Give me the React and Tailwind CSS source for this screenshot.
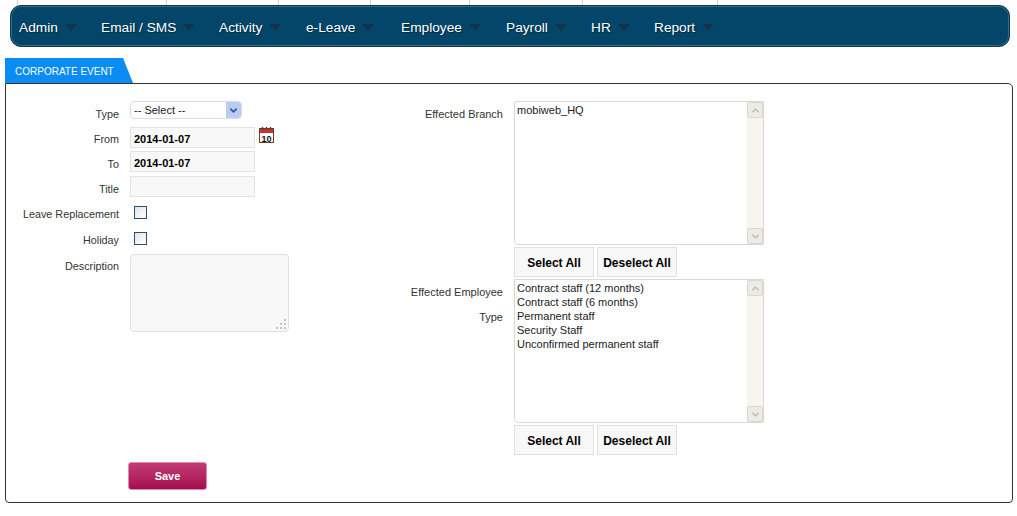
import { ChevronDown, ChevronUp } from 'lucide-react';

const topCells = ['w-[18px]', 'w-[149px]', 'w-[112px]', 'w-[92px]', 'w-[99px]', 'w-[113px]', 'w-[135px]'];

const menuItems = [
  { label: 'Admin', width: 'w-[82px]' },
  { label: 'Email / SMS', width: 'w-[118px]' },
  { label: 'Activity', width: 'w-[87px]' },
  { label: 'e-Leave', width: 'w-[95px]' },
  { label: 'Employee', width: 'w-[105px]' },
  { label: 'Payroll', width: 'w-[85px]' },
  { label: 'HR', width: 'w-[63px]' },
  { label: 'Report', width: 'w-[80px]' },
];

const employeeTypes = [
  'Contract staff (12 months)',
  'Contract staff (6 months)',
  'Permanent staff',
  'Security Staff',
  'Unconfirmed permanent staff',
];

// Label on the left, right aligned, with the field beside it
const FormRow = ({ label, className, labelClass = 'pt-[4px]', children }) => (
  <div className={`flex gap-[11px] ${className}`}>
    <label className={`w-[113px] shrink-0 text-right text-[10.8px] leading-[16px] ${labelClass}`}>{label}</label>
    {children}
  </div>
);

const TextField = ({ value }) => (
  <div className="w-[125px] h-[21px] border border-[#e3e3e3] bg-[#f8f8f8] px-[3px] text-[11px] leading-[22px] font-bold text-black">
    {value}
  </div>
);

const CheckBox = () => (
  <div className="ml-[4px] w-[13px] h-[13px] border border-[#2f5068] bg-gradient-to-br from-[#dfe5ea] to-white" />
);

const CalendarIcon = () => (
  <svg width="15" height="16" viewBox="0 0 15 16" className="ml-[4px]">
    <rect x="0.5" y="1.5" width="14" height="14" fill="#fff" stroke="#6b3b2a" />
    <rect x="1" y="2" width="13" height="4" fill="#c8342a" />
    <path d="M3.5 0v3M7.5 0v3M11.5 0v3" stroke="#5a3a30" strokeWidth="1.4" />
    <text x="7.5" y="14.5" textAnchor="middle" fontSize="9" fontWeight="700" fontFamily="'Liberation Sans', sans-serif" fill="#111">10</text>
  </svg>
);

// Listbox with a painted scrollbar track
const ListBox = ({ items }) => (
  <div className="relative w-[250px] h-[144px] border border-[#d8d8d8] rounded-bl-[4px] bg-white pl-[2px] pt-[1px] text-[11px] leading-[14px] text-[#222]">
    {items.map((item) => (
      <div key={item}>{item}</div>
    ))}
    <div className="absolute right-0 top-0 bottom-0 w-[16px] bg-[#f6f5f0] flex flex-col justify-between">
      <div className="h-[16px] bg-[#ecebe4] border border-[#d9d8d0] rounded-[2px] flex items-center justify-center">
        <ChevronUp size={11} strokeWidth={3} className="text-[#b5b5ab]" />
      </div>
      <div className="h-[16px] bg-[#ecebe4] border border-[#d9d8d0] rounded-[2px] flex items-center justify-center">
        <ChevronDown size={11} strokeWidth={3} className="text-[#b5b5ab]" />
      </div>
    </div>
  </div>
);

const SelectButtons = () => (
  <div className="flex gap-[3px] mt-[2px]">
    <button className="w-[80px] h-[30px] pt-[2px] border border-[#e0e0e0] bg-[#f8f8f8] text-[12px] font-bold text-black">Select All</button>
    <button className="w-[80px] h-[30px] pt-[2px] border border-[#e0e0e0] bg-[#f8f8f8] text-[12px] font-bold text-black">Deselect All</button>
  </div>
);

const App = () => {
  return (
    <div className="w-[1017px] h-[516px] bg-white overflow-hidden font-['Liberation_Sans',Arial,sans-serif] text-[11px] text-[#333]">
      {/* Stubs of the bar above the menu */}
      <div className="flex h-[5px]">
        {topCells.map((width, i) => (
          <div key={i} className={`${width} h-full border-r border-[#cfcfcf]`} />
        ))}
      </div>

      {/* Main menu */}
      <nav className="ml-[10px] mr-[7px] h-[42px] flex items-center pl-[8px] pt-[4px] rounded-[11px] border border-[#16354a] bg-[#03466a] shadow-[inset_0_0_0_1px_#2f6a88]">
        {menuItems.map(({ label, width }) => (
          <div key={label} className={`${width} flex items-center gap-[7px] text-[13.7px] text-white [text-shadow:1px_1px_1px_#00283f]`}>
            <span>{label}</span>
            <span className="w-0 h-0 border-x-[6px] border-x-transparent border-t-[7px] border-t-[#14324a]" />
          </div>
        ))}
      </nav>

      {/* Tab */}
      <div className="mt-[11px] ml-[5px] w-[128px] h-[25px] pl-[10px] bg-[#0a8cf5] [clip-path:polygon(0_0,118px_0,128px_100%,0_100%)] text-[10px] leading-[27px] text-white">
        CORPORATE EVENT
      </div>

      {/* Form panel */}
      <div className="mr-[4px] ml-[5px] h-[420px] border border-[#333] rounded-tr-[5px] rounded-b-[4px] flex pt-[17px]">
        <div className="w-[372px] shrink-0">
          <FormRow label="Type" labelClass="pt-[5px]" className="h-[18px]">
            <div className="relative w-[112px] h-[18px] border border-[#d3deee] rounded-[4px] bg-white pl-[3px] text-[11px] leading-[16px] text-[#222]">
              -- Select --
              <div className="absolute right-0 top-0 bottom-0 w-[15px] rounded-r-[3px] bg-[#b9cdf2] flex items-center justify-center">
                <ChevronDown size={11} strokeWidth={3.5} className="text-[#35568f]" />
              </div>
            </div>
          </FormRow>
          <FormRow label="From" className="mt-[8px] items-start">
            <TextField value="2014-01-07" />
            <div className="-ml-[11px]"><CalendarIcon /></div>
          </FormRow>
          <FormRow label="To" labelClass="pt-[5px]" className="mt-[3px]">
            <TextField value="2014-01-07" />
          </FormRow>
          <FormRow label="Title" labelClass="pt-[5px]" className="mt-[4px]">
            <TextField />
          </FormRow>
          <FormRow label="Leave Replacement" labelClass="pt-0" className="mt-[9px] h-[13px]">
            <CheckBox />
          </FormRow>
          <FormRow label="Holiday" labelClass="pt-0" className="mt-[13px] h-[13px]">
            <CheckBox />
          </FormRow>
          <FormRow label="Description" className="mt-[9px]">
            <div className="relative w-[159px] h-[78px] border border-[#e0e0e0] rounded-[4px] bg-[#f8f8f8]">
              <svg width="11" height="11" viewBox="0 0 11 11" className="absolute right-[1px] bottom-[1px]" fill="#c4c4c4">
                <rect x="8" y="0" width="2" height="2" />
                <rect x="4" y="4" width="2" height="2" />
                <rect x="8" y="4" width="2" height="2" />
                <rect x="0" y="8" width="2" height="2" />
                <rect x="4" y="8" width="2" height="2" />
                <rect x="8" y="8" width="2" height="2" />
              </svg>
            </div>
          </FormRow>
          <button className="block ml-[122px] mt-[130px] w-[79px] h-[28px] rounded-[3px] border border-[#e08ab0] bg-gradient-to-b from-[#c23a75] to-[#a50a4f] text-[11px] font-bold text-white">
            Save
          </button>
        </div>

        <div className="flex gap-[11px]">
          <div className="w-[125px] shrink-0 text-right">
            <div className="h-[178px] pt-[5px] leading-[16px]">Effected Branch</div>
            <div className="pt-[1px] leading-[25px]">
              Effected Employee
              <br />
              Type
            </div>
          </div>
          <div>
            <ListBox items={['mobiweb_HQ']} />
            <SelectButtons />
            <div className="mt-[2px]">
              <ListBox items={employeeTypes} />
            </div>
            <SelectButtons />
          </div>
        </div>
      </div>
    </div>
  );
};

export default App;
